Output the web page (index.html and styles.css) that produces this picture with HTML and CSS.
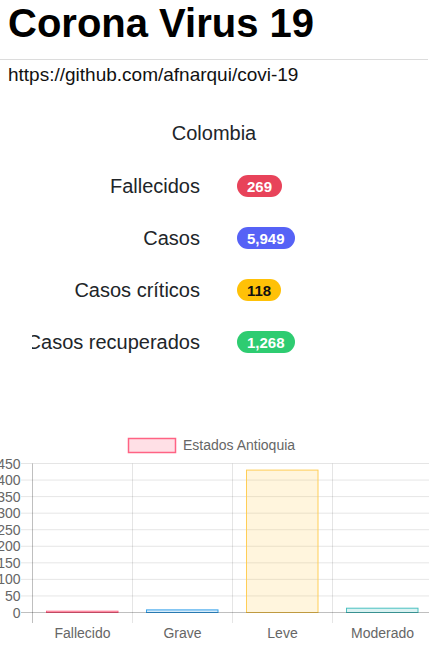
FILE: index.html
```html
<!DOCTYPE html>
<html lang="es">
<head>
<meta charset="utf-8">
<title>Corona Virus 19</title>
<link rel="stylesheet" href="styles.css">
</head>
<body>
<main class="page">
  <h1 class="title">Corona Virus 19</h1>
  <hr class="divider">
  <p class="repo">https://github.com/afnarqui/covi-19</p>
  <h2 class="country">Colombia</h2>
  <section class="stats">
    <div class="stat"><div class="stat-label">Fallecidos</div><div><span class="badge badge-red">269</span></div></div>
    <div class="stat"><div class="stat-label">Casos</div><div><span class="badge badge-blue">5,949</span></div></div>
    <div class="stat"><div class="stat-label">Casos críticos</div><div><span class="badge badge-yellow">118</span></div></div>
    <div class="stat"><div class="stat-label">Casos recuperados</div><div><span class="badge badge-green">1,268</span></div></div>
  </section>
</main>
<svg class="chart" width="436" height="238" viewBox="0 0 436 238" xmlns="http://www.w3.org/2000/svg">
  <!-- legend -->
  <rect x="128.5" y="18.5" width="47" height="14" fill="rgba(255,99,132,0.2)" stroke="rgb(255,99,132)" stroke-width="1.5"/>
  <text class="chart-text" x="183" y="29.5">Estados Antioquia</text>
  <!-- horizontal grid -->
  <g stroke="rgba(0,0,0,0.1)" stroke-width="1">
    <line x1="21" y1="43.5" x2="429" y2="43.5"/>
    <line x1="21" y1="60.06" x2="429" y2="60.06"/>
    <line x1="21" y1="76.61" x2="429" y2="76.61"/>
    <line x1="21" y1="93.17" x2="429" y2="93.17"/>
    <line x1="21" y1="109.72" x2="429" y2="109.72"/>
    <line x1="21" y1="126.28" x2="429" y2="126.28"/>
    <line x1="21" y1="142.83" x2="429" y2="142.83"/>
    <line x1="21" y1="159.39" x2="429" y2="159.39"/>
    <line x1="21" y1="175.94" x2="429" y2="175.94"/>
  </g>
  <!-- vertical grid -->
  <g stroke="rgba(0,0,0,0.1)" stroke-width="1">
    <line x1="132.5" y1="43.5" x2="132.5" y2="203"/>
    <line x1="232.5" y1="43.5" x2="232.5" y2="203"/>
    <line x1="332.5" y1="43.5" x2="332.5" y2="203"/>
  </g>
  <!-- bars -->
  <rect x="46.5" y="191.2" width="71.5" height="1.3" fill="rgba(255,99,132,0.2)" stroke="rgb(255,99,132)" stroke-width="1"/>
  <rect x="146.5" y="189.9" width="71.5" height="2.6" fill="rgba(54,162,235,0.2)" stroke="rgb(54,162,235)" stroke-width="1"/>
  <rect x="246.5" y="50.1" width="71.5" height="142.4" fill="rgba(255,206,86,0.2)" stroke="rgb(255,206,86)" stroke-width="1"/>
  <rect x="346.5" y="188.2" width="71.5" height="4.3" fill="rgba(75,192,192,0.2)" stroke="rgb(75,192,192)" stroke-width="1"/>
  <!-- axes -->
  <line x1="21" y1="192.5" x2="429" y2="192.5" stroke="rgba(0,0,0,0.25)" stroke-width="1"/>
  <line x1="32.5" y1="43.5" x2="32.5" y2="203" stroke="rgba(0,0,0,0.25)" stroke-width="1"/>
  <!-- y labels -->
  <g class="chart-text" text-anchor="end">
    <text x="20.5" y="48.5">450</text>
    <text x="20.5" y="65.06">400</text>
    <text x="20.5" y="81.61">350</text>
    <text x="20.5" y="98.17">300</text>
    <text x="20.5" y="114.72">250</text>
    <text x="20.5" y="131.28">200</text>
    <text x="20.5" y="147.83">150</text>
    <text x="20.5" y="164.39">100</text>
    <text x="20.5" y="180.94">50</text>
    <text x="20.5" y="197.5">0</text>
  </g>
  <!-- x labels -->
  <g class="chart-text" text-anchor="middle">
    <text x="82.5" y="218">Fallecido</text>
    <text x="182.5" y="218">Grave</text>
    <text x="282.5" y="218">Leve</text>
    <text x="382.5" y="218">Moderado</text>
  </g>
</svg>
</body>
</html>
```
FILE: styles.css
```css
html, body {
  margin: 0;
  padding: 0;
  background: #fff;
}

body {
  font-family: "Liberation Sans", Arial, sans-serif;
  color: #212529;
  width: 436px;
  height: 658px;
  overflow: hidden;
}

.page {
  width: 428px;
}

.title {
  margin: 0;
  padding-left: 8px;
  font-size: 40px;
  line-height: 46px;
  font-weight: bold;
  color: #000;
}

.divider {
  margin: 13px 0 0 0;
  border: 0;
  border-top: 1px solid #dcdcdc;
  height: 0;
}

.repo {
  margin: 4px 0 0 8px;
  font-size: 19px;
  line-height: 22px;
  color: #111;
}

.country {
  margin: 35px 0 0 0;
  font-size: 20px;
  line-height: 24px;
  font-weight: normal;
  text-align: center;
}

.stats {
  margin-top: 15px;
  display: flex;
  flex-direction: column;
}

.stat {
  display: grid;
  grid-template-columns: 168px auto;
  column-gap: 37px;
  align-items: center;
  height: 52px;
  padding-left: 32px;
}

.stat-label {
  display: flex;
  justify-content: flex-end;
  overflow: hidden;
  white-space: nowrap;
  font-size: 20px;
  line-height: 24px;
}

.badge {
  display: inline-block;
  font-size: 15px;
  font-weight: bold;
  line-height: 1;
  padding: 3.75px 10px;
  border-radius: 11px;
  color: #fff;
  vertical-align: middle;
}

.badge-red { background: #e8435a; }
.badge-blue { background: #5662f6; }
.badge-yellow { background: #ffc107; color: #111; }
.badge-green { background: #2ecc71; }

.chart {
  display: block;
  margin-top: 52px;
}

.chart-text {
  font-family: "Liberation Sans", Arial, sans-serif;
  font-size: 14px;
  fill: #666;
}
```
